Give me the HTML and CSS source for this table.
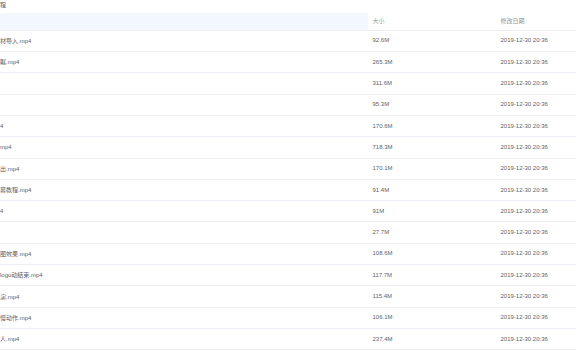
FILE: index.html
```html
<!DOCTYPE html>
<html lang="zh-CN">
<head>
<meta charset="utf-8">
<link rel="stylesheet" href="styles.css">
</head>
<body>
<div class="page">
  <div class="title">程</div>
  <div class="table">
    <div class="row head">
      <div class="cell name sorted"></div>
      <div class="cell">大小</div>
      <div class="cell">修改日期</div>
    </div>
    <div class="row"><div class="cell name">材导入.mp4</div><div class="cell">92.6M</div><div class="cell">2019-12-30 20:36</div></div>
    <div class="row"><div class="cell name">瞩.mp4</div><div class="cell">265.3M</div><div class="cell">2019-12-30 20:36</div></div>
    <div class="row"><div class="cell name"></div><div class="cell">311.6M</div><div class="cell">2019-12-30 20:36</div></div>
    <div class="row"><div class="cell name"></div><div class="cell">95.3M</div><div class="cell">2019-12-30 20:36</div></div>
    <div class="row"><div class="cell name">4</div><div class="cell">170.6M</div><div class="cell">2019-12-30 20:36</div></div>
    <div class="row"><div class="cell name">mp4</div><div class="cell">718.3M</div><div class="cell">2019-12-30 20:36</div></div>
    <div class="row"><div class="cell name">出.mp4</div><div class="cell">170.1M</div><div class="cell">2019-12-30 20:36</div></div>
    <div class="row"><div class="cell name">幕教程.mp4</div><div class="cell">91.4M</div><div class="cell">2019-12-30 20:36</div></div>
    <div class="row"><div class="cell name">4</div><div class="cell">91M</div><div class="cell">2019-12-30 20:36</div></div>
    <div class="row"><div class="cell name"></div><div class="cell">27.7M</div><div class="cell">2019-12-30 20:36</div></div>
    <div class="row"><div class="cell name">图效果.mp4</div><div class="cell">108.6M</div><div class="cell">2019-12-30 20:36</div></div>
    <div class="row"><div class="cell name">logo动結束.mp4</div><div class="cell">117.7M</div><div class="cell">2019-12-30 20:36</div></div>
    <div class="row"><div class="cell name">演.mp4</div><div class="cell">115.4M</div><div class="cell">2019-12-30 20:36</div></div>
    <div class="row"><div class="cell name">慢动作.mp4</div><div class="cell">106.1M</div><div class="cell">2019-12-30 20:36</div></div>
    <div class="row"><div class="cell name">人.mp4</div><div class="cell">237.4M</div><div class="cell">2019-12-30 20:36</div></div>
  </div>
</div>
</body>
</html>
```

FILE: styles.css
```css
html, body {
  margin: 0;
  padding: 0;
  background: #ffffff;
}

.page {
  font-family: "Liberation Sans", "Noto Sans CJK SC", sans-serif;
  font-size: 6px;
  color: #606266;
  width: 576px;
  overflow: hidden;
}

.title {
  height: 13px;
  line-height: 11px;
  color: #606266;
}

.table {
  display: flex;
  flex-direction: column;
}

.row {
  display: grid;
  grid-template-columns: 367.5px 128px 1fr;
  height: 21.3px;
  box-sizing: border-box;
  border-bottom: 1px solid #ebeef5;
}

.row.head {
  height: 17.8px;
  color: #909399;
}

.cell {
  display: flex;
  align-items: center;
  padding-left: 5px;
  padding-bottom: 1px;
  white-space: nowrap;
  overflow: hidden;
}

.cell.name {
  padding-left: 0;
}

.cell.sorted {
  background: #f2f8fe;
}
```
